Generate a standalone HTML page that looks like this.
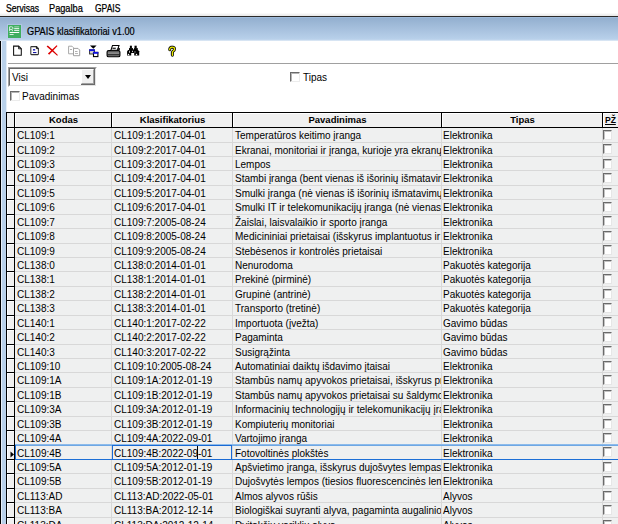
<!DOCTYPE html>
<html><head><meta charset="utf-8">
<style>
*{margin:0;padding:0;box-sizing:border-box}
html,body{width:618px;height:524px;overflow:hidden;background:#fff;font-family:"Liberation Sans",sans-serif;position:relative;color:#000}
.abs{position:absolute}
.m{position:absolute;top:2.5px;font-size:10px;white-space:nowrap;transform-origin:0 0;-webkit-text-stroke:0.25px #000}
#mbar{position:absolute;left:0;top:0;width:618px;height:16px;background:linear-gradient(#fff 0,#fff 13px,#f4f4f4 14px,#e8e8e8 16px)}
#mline{position:absolute;left:0;top:16px;width:618px;height:1px;background:#2a2a2a}
#title{position:absolute;left:0;top:17px;width:618px;height:24px;background:linear-gradient(#a4c0e0 0px,#94b0d0 1.5px,#b8d0ea 22px,#c4d8ee 23px,#eaf1f8 24px)}
#ttext{position:absolute;left:27px;top:26px;font-size:10px;-webkit-text-stroke:0.2px #000;white-space:nowrap;transform:scaleX(0.92);transform-origin:0 0}
#frameL{position:absolute;left:0;top:41px;width:6px;height:483px;background:#b9d1ea;border-left:1px solid #000}
#frameL2{position:absolute;left:6px;top:41px;width:1px;height:71px;background:#e4edf7}
#frameL:after{content:"";position:absolute;left:0;top:0;width:1px;height:100%;background:#e6eef8}
#sep{position:absolute;left:8px;top:63px;width:610px;height:1px;background:#a0a0a0}
#combo{position:absolute;left:8px;top:67px;width:89px;height:20px;border-top:1px solid #a0a0a0;border-left:1px solid #a0a0a0;border-right:1px solid #fff;border-bottom:1px solid #fff}
#combo .in{position:absolute;left:0;top:0;right:0;bottom:0;border-top:1px solid #696969;border-left:1px solid #696969;border-right:1px solid #e3e3e3;border-bottom:1px solid #e3e3e3;background:#fff}
#combo .txt{position:absolute;left:2px;top:3px;font-size:10px}
#combo .btn{position:absolute;right:0;top:0;width:14px;bottom:0;background:#f0f0f0;border-right:1px solid #696969;border-bottom:1px solid #696969}
#combo .btn:before{content:"";position:absolute;left:0;top:0;right:0;bottom:0;border-top:1px solid #fff;border-left:1px solid #fff;border-right:1px solid #a0a0a0;border-bottom:1px solid #a0a0a0}
#combo .arr{position:absolute;left:4px;top:6px;width:0;height:0;border-left:3px solid transparent;border-right:3px solid transparent;border-top:4px solid #000}
.chk{position:absolute;width:10px;height:10px;background:#fff;border-top:1px solid #6a6a6a;border-left:1px solid #6a6a6a;border-right:1px solid #ececec;border-bottom:1px solid #ececec;box-shadow:inset 1px 1px 0 #b4b4b4}
.lbl{position:absolute;font-size:10px;white-space:nowrap}
#grid{position:absolute;left:6px;top:112px;width:612px;height:412px;background:#eff0f0;border-top:1px solid #000;border-left:1px solid #000}
.hdr{position:absolute;top:113px;height:14px;background:#f0f0f0;border-top:1px solid #fff;border-left:1px solid #fff;font-weight:bold;font-size:9.5px;text-align:center;white-space:nowrap;line-height:12px}
.hline{position:absolute;top:127px;left:6px;width:612px;height:1px;background:#000}
.vline{position:absolute;top:113px;width:1px;height:15px;background:#000}
.dline{position:absolute;top:128px;width:1px;height:396px;background:#d8d8d8}
.ind{position:absolute;left:7px;width:7px;background:#f0f0f0;border-top:1px solid #fff;border-left:1px solid #fff}
.iline{position:absolute;left:7px;width:8px;height:1px;background:#000}
.rline{position:absolute;left:15px;width:603px;height:1px;background:#d8d8d8}
.cell{position:absolute;overflow:hidden;white-space:nowrap;font-size:10px}
.cell span{position:absolute;left:2px;top:2px}
.cb{position:absolute;left:603px;width:9px;height:10px;background:#fff;border-top:1px solid #6a6a6a;border-left:1px solid #6a6a6a;border-right:1px solid #e6e6e6;border-bottom:1px solid #e6e6e6;box-shadow:inset 1px 1px 0 #c4c4c4}
#indv{position:absolute;left:14px;top:113px;width:1px;height:411px;background:#000}
.selt{position:absolute;left:15px;width:603px;height:2px;background:linear-gradient(#9cc4ee,#5f9de0)}
.selb{position:absolute;left:15px;width:603px;height:1px;background:#1c6fd6}
.foc{position:absolute;border:1px solid #1a6ad4}
.sell{position:absolute;left:15px;width:1px;background:#1c6fd6}
.caret{position:absolute;width:1px;background:#000}
</style></head><body>
<div id="mbar"></div>
<span class="m" style="left:5.5px;transform:scaleX(0.865)">Servisas</span>
<span class="m" style="left:49px;transform:scaleX(0.92)">Pagalba</span>
<span class="m" style="left:95px;transform:scaleX(0.85)">GPAIS</span>
<div id="mline"></div>
<div id="title"></div>
<svg class="abs" style="left:7px;top:24px" width="15" height="15">
<rect x="0" y="0" width="15" height="15" fill="#c4cdf0" opacity="0.5"/>
<rect x="1" y="1" width="13" height="13" fill="#3fae60"/>
<path d="M2.6 7.2 V2.8 H4.6 Q6 2.8 6 4.2 Q6 5.4 4.6 5.4 H2.6 M4.2 5.4 L6 7.2" fill="none" stroke="#e8f5ec" stroke-width="0.9"/>
<rect x="7.2" y="3.8" width="5" height="1" fill="#fff"/>
<rect x="7.2" y="5.8" width="5" height="1" fill="#fff"/>
<rect x="2.6" y="8" width="9.6" height="1" fill="#fff"/>
<rect x="2.6" y="10" width="4" height="1" fill="#d8eedf"/>
<rect x="7.2" y="2" width="5" height="0.8" fill="#8fd0a5"/>
</svg>
<div id="ttext">GPAIS klasifikatoriai v1.00</div>
<div id="frameL"></div><div id="frameL2"></div>

<svg class="abs" style="left:0;top:0" width="200" height="62">
 <!-- new page -->
 <path d="M13.6 46.1 H18.6 L21.3 48.8 V55.2 H13.6 Z" fill="#fff" stroke="#111" stroke-width="1.05"/>
 <path d="M18.6 46.1 V48.8 H21.3" fill="none" stroke="#111" stroke-width="0.9"/>
 <!-- doc 2 -->
 <path d="M30.8 47.2 Q30.8 46.6 31.4 46.6 H36.6 L38.4 48.4 V54 Q38.4 54.6 37.8 54.6 H31.4 Q30.8 54.6 30.8 54 Z" fill="#fff" stroke="#333" stroke-width="1.05"/>
 <path d="M36.4 46.6 V48.6 H38.4" fill="none" stroke="#111" stroke-width="1"/>
 <rect x="33" y="49" width="2.2" height="1.6" fill="#3030c0"/>
 <rect x="33" y="52" width="3.4" height="1.1" fill="#1818a0"/>
 <!-- red x -->
 <path d="M46.6 46.6 L47.8 45.4 L52.4 49.4 L57.9 55 L57.2 55.8 L51.2 50.4 Z" fill="#d80000"/>
 <path d="M56.6 45.2 L57.5 46 L50.6 53.2 L49.2 54.8 L47.9 53.6 L49.6 51.9 Z" fill="#e00000"/>
 <!-- grey copy -->
 <path d="M68.6 46.2 H72 L73.6 47.8 V53.8 H68.6 Z" fill="#fff" stroke="#a8a8a8" stroke-width="1"/>
 <path d="M73.5 48.4 H78 L79.7 50.1 V55.7 H73.5 Z" fill="#fff" stroke="#a0a0a0" stroke-width="1"/>
 <rect x="70" y="49" width="2" height="1" fill="#b0b0b0"/>
 <rect x="75" y="51" width="2.5" height="1" fill="#b0b0b0"/>
 <rect x="75" y="53" width="3" height="1" fill="#b8b8b8"/>
 <!-- filter windows -->
 <path d="M90 45.4 H96.6 L93.3 48.8 Z" fill="#000"/>
 <rect x="89.6" y="49.8" width="4.8" height="4.2" fill="#d8d8d0" stroke="#222" stroke-width="0.9"/>
 <rect x="89.2" y="49.3" width="5.6" height="1.8" fill="#1010e0"/>
 <rect x="93.5" y="52.4" width="4.4" height="4.2" fill="#fff" stroke="#000" stroke-width="1.1"/>
 <rect x="93" y="51.9" width="5.3" height="1.9" fill="#1010e0"/>
 <!-- printer -->
 <path d="M108.6 50.6 H118.4 Q119.9 50.6 119.9 52.1 V55.4 Q119.9 56.7 118.4 56.7 H108.6 Q107.1 56.7 107.1 55.4 V52.1 Q107.1 50.6 108.6 50.6 Z" fill="#8a8a8a" stroke="#000" stroke-width="1.15"/>
 <rect x="107.6" y="54.3" width="11.8" height="1" fill="#111"/>
 <rect x="108" y="51.4" width="11" height="0.8" fill="#555"/>
 <path d="M112.5 45.5 H119 L117.5 50.2 H110.9 Z" fill="#fff" stroke="#000" stroke-width="1.05"/>
 <rect x="112.4" y="47.7" width="3.4" height="1.1" fill="#000"/>
 <rect x="117.6" y="48.2" width="2.4" height="1.6" fill="#000"/>
 <!-- binoculars -->
 <g fill="#000">
 <rect x="129.9" y="45.7" width="2" height="2.7"/>
 <rect x="129" y="48.1" width="4" height="3"/>
 <path d="M127.1 55.6 V51.2 L128.2 50 H131.2 V55.6 Z"/>
 <rect x="131" y="49.4" width="3.4" height="3.6"/>
 <rect x="134.5" y="45.7" width="2.2" height="2.7"/>
 <rect x="134" y="48.1" width="3.8" height="3"/>
 <path d="M134.2 55.6 V50 H138 L139.2 51.2 V55.6 Z"/>
 </g>
 <circle cx="128.5" cy="54.4" r="0.75" fill="#fff"/>
 <circle cx="136.5" cy="54.4" r="0.75" fill="#fff"/>
 <rect x="129.1" y="50.8" width="0.8" height="2" fill="#eee"/>
 <rect x="132.1" y="50.8" width="0.9" height="1.3" fill="#ddd"/>
 <rect x="134.6" y="51.2" width="0.9" height="1.5" fill="#888"/>
 <!-- help -->
 <rect x="170.2" y="44.9" width="3.8" height="1" fill="#c8c8ee" opacity="0.7"/>
 <rect x="170.2" y="50.5" width="1" height="5" fill="#b8b8e0" opacity="0.6"/>
 <path d="M169.7 49.8 Q169.6 47.2 172.1 47.2 Q174.5 47.2 174.5 49 Q174.5 50.3 173.3 51 Q172.4 51.6 172.4 52.8 V55.3" fill="none" stroke="#000" stroke-width="2.9" stroke-linecap="round"/>
 <path d="M169.7 49.8 Q169.6 47.2 172.1 47.2 Q174.5 47.2 174.5 49 Q174.5 50.3 173.3 51 Q172.4 51.6 172.4 52.8 V55.3" fill="none" stroke="#eeee00" stroke-width="1.3" stroke-linecap="round"/>
</svg>

<div id="sep"></div>
<div id="combo"><div class="in"><span class="txt">Visi</span><div class="btn"><div class="arr"></div></div></div></div>
<div class="chk" style="left:290px;top:72px"></div><div class="lbl" style="left:303px;top:72px">Tipas</div>
<div class="chk" style="left:10px;top:91px"></div><div class="lbl" style="left:22px;top:91px">Pavadinimas</div>
<div id="grid"></div>
<div class="hdr" style="left:15px;width:96px">Kodas</div>
<div class="hdr" style="left:112px;width:120px">Klasifikatorius</div>
<div class="hdr" style="left:233px;width:208px">Pavadinimas</div>
<div class="hdr" style="left:442px;width:160px">Tipas</div>
<div class="hdr" style="left:603px;width:20px;text-align:left;padding-left:1px"><span style="display:inline-block;border-bottom:1px solid #000;line-height:9px;transform:scaleX(0.9);transform-origin:0 0">PŽ</span></div>
<div class="vline" style="left:14px"></div>
<div class="vline" style="left:111px"></div>
<div class="vline" style="left:232px"></div>
<div class="vline" style="left:441px"></div>
<div class="vline" style="left:602px"></div>
<div class="hline"></div>
<div class="dline" style="left:111px"></div>
<div class="dline" style="left:232px"></div>
<div class="dline" style="left:441px"></div>
<div class="dline" style="left:602px"></div>
<div id="indv"></div>
<div class="ind" style="top:128px;height:14px"></div>
<div class="iline" style="top:142px"></div>
<div class="rline" style="top:142px"></div>
<div class="cell" style="left:15px;top:128px;width:96px;height:14px"><span>CL109:1</span></div>
<div class="cell" style="left:112px;top:128px;width:120px;height:14px"><span>CL109:1:2017-04-01</span></div>
<div class="cell" style="left:233px;top:128px;width:208px;height:14px"><span>Temperatūros keitimo įranga</span></div>
<div class="cell" style="left:442px;top:128px;width:160px;height:14px"><span style="left:1px">Elektronika</span></div>
<div class="cb" style="top:130px"></div>
<div class="ind" style="top:143px;height:13px"></div>
<div class="iline" style="top:156px"></div>
<div class="rline" style="top:156px"></div>
<div class="cell" style="left:15px;top:143px;width:96px;height:13px"><span>CL109:2</span></div>
<div class="cell" style="left:112px;top:143px;width:120px;height:13px"><span>CL109:2:2017-04-01</span></div>
<div class="cell" style="left:233px;top:143px;width:208px;height:13px"><span>Ekranai, monitoriai ir įranga, kurioje yra ekranų, kurių paviršiaus plotas</span></div>
<div class="cell" style="left:442px;top:143px;width:160px;height:13px"><span style="left:1px">Elektronika</span></div>
<div class="cb" style="top:144px"></div>
<div class="ind" style="top:157px;height:13px"></div>
<div class="iline" style="top:170px"></div>
<div class="rline" style="top:170px"></div>
<div class="cell" style="left:15px;top:157px;width:96px;height:13px"><span>CL109:3</span></div>
<div class="cell" style="left:112px;top:157px;width:120px;height:13px"><span>CL109:3:2017-04-01</span></div>
<div class="cell" style="left:233px;top:157px;width:208px;height:13px"><span>Lempos</span></div>
<div class="cell" style="left:442px;top:157px;width:160px;height:13px"><span style="left:1px">Elektronika</span></div>
<div class="cb" style="top:159px"></div>
<div class="ind" style="top:171px;height:14px"></div>
<div class="iline" style="top:185px"></div>
<div class="rline" style="top:185px"></div>
<div class="cell" style="left:15px;top:171px;width:96px;height:14px"><span>CL109:4</span></div>
<div class="cell" style="left:112px;top:171px;width:120px;height:14px"><span>CL109:4:2017-04-01</span></div>
<div class="cell" style="left:233px;top:171px;width:208px;height:14px"><span>Stambi įranga (bent vienas iš išorinių išmatavimų didesnis kaip 50 cm)</span></div>
<div class="cell" style="left:442px;top:171px;width:160px;height:14px"><span style="left:1px">Elektronika</span></div>
<div class="cb" style="top:173px"></div>
<div class="ind" style="top:186px;height:13px"></div>
<div class="iline" style="top:199px"></div>
<div class="rline" style="top:199px"></div>
<div class="cell" style="left:15px;top:186px;width:96px;height:13px"><span>CL109:5</span></div>
<div class="cell" style="left:112px;top:186px;width:120px;height:13px"><span>CL109:5:2017-04-01</span></div>
<div class="cell" style="left:233px;top:186px;width:208px;height:13px"><span>Smulki įranga (nė vienas iš išorinių išmatavimų nėra didesnis kaip 50 cm)</span></div>
<div class="cell" style="left:442px;top:186px;width:160px;height:13px"><span style="left:1px">Elektronika</span></div>
<div class="cb" style="top:188px"></div>
<div class="ind" style="top:200px;height:14px"></div>
<div class="iline" style="top:214px"></div>
<div class="rline" style="top:214px"></div>
<div class="cell" style="left:15px;top:200px;width:96px;height:14px"><span>CL109:6</span></div>
<div class="cell" style="left:112px;top:200px;width:120px;height:14px"><span>CL109:6:2017-04-01</span></div>
<div class="cell" style="left:233px;top:200px;width:208px;height:14px"><span>Smulki IT ir telekomunikacijų įranga (nė vienas iš išorinių išmatavimų)</span></div>
<div class="cell" style="left:442px;top:200px;width:160px;height:14px"><span style="left:1px">Elektronika</span></div>
<div class="cb" style="top:202px"></div>
<div class="ind" style="top:215px;height:13px"></div>
<div class="iline" style="top:228px"></div>
<div class="rline" style="top:228px"></div>
<div class="cell" style="left:15px;top:215px;width:96px;height:13px"><span>CL109:7</span></div>
<div class="cell" style="left:112px;top:215px;width:120px;height:13px"><span>CL109:7:2005-08-24</span></div>
<div class="cell" style="left:233px;top:215px;width:208px;height:13px"><span>Žaislai, laisvalaikio ir sporto įranga</span></div>
<div class="cell" style="left:442px;top:215px;width:160px;height:13px"><span style="left:1px">Elektronika</span></div>
<div class="cb" style="top:216px"></div>
<div class="ind" style="top:229px;height:14px"></div>
<div class="iline" style="top:243px"></div>
<div class="rline" style="top:243px"></div>
<div class="cell" style="left:15px;top:229px;width:96px;height:14px"><span>CL109:8</span></div>
<div class="cell" style="left:112px;top:229px;width:120px;height:14px"><span>CL109:8:2005-08-24</span></div>
<div class="cell" style="left:233px;top:229px;width:208px;height:14px"><span>Medicininiai prietaisai (išskyrus implantuotus ir užkrėstus gaminius)</span></div>
<div class="cell" style="left:442px;top:229px;width:160px;height:14px"><span style="left:1px">Elektronika</span></div>
<div class="cb" style="top:231px"></div>
<div class="ind" style="top:244px;height:13px"></div>
<div class="iline" style="top:257px"></div>
<div class="rline" style="top:257px"></div>
<div class="cell" style="left:15px;top:244px;width:96px;height:13px"><span>CL109:9</span></div>
<div class="cell" style="left:112px;top:244px;width:120px;height:13px"><span>CL109:9:2005-08-24</span></div>
<div class="cell" style="left:233px;top:244px;width:208px;height:13px"><span>Stebėsenos ir kontrolės prietaisai</span></div>
<div class="cell" style="left:442px;top:244px;width:160px;height:13px"><span style="left:1px">Elektronika</span></div>
<div class="cb" style="top:245px"></div>
<div class="ind" style="top:258px;height:13px"></div>
<div class="iline" style="top:271px"></div>
<div class="rline" style="top:271px"></div>
<div class="cell" style="left:15px;top:258px;width:96px;height:13px"><span>CL138:0</span></div>
<div class="cell" style="left:112px;top:258px;width:120px;height:13px"><span>CL138:0:2014-01-01</span></div>
<div class="cell" style="left:233px;top:258px;width:208px;height:13px"><span>Nenurodoma</span></div>
<div class="cell" style="left:442px;top:258px;width:160px;height:13px"><span style="left:1px">Pakuotės kategorija</span></div>
<div class="cb" style="top:260px"></div>
<div class="ind" style="top:272px;height:14px"></div>
<div class="iline" style="top:286px"></div>
<div class="rline" style="top:286px"></div>
<div class="cell" style="left:15px;top:272px;width:96px;height:14px"><span>CL138:1</span></div>
<div class="cell" style="left:112px;top:272px;width:120px;height:14px"><span>CL138:1:2014-01-01</span></div>
<div class="cell" style="left:233px;top:272px;width:208px;height:14px"><span>Prekinė (pirminė)</span></div>
<div class="cell" style="left:442px;top:272px;width:160px;height:14px"><span style="left:1px">Pakuotės kategorija</span></div>
<div class="cb" style="top:274px"></div>
<div class="ind" style="top:287px;height:13px"></div>
<div class="iline" style="top:300px"></div>
<div class="rline" style="top:300px"></div>
<div class="cell" style="left:15px;top:287px;width:96px;height:13px"><span>CL138:2</span></div>
<div class="cell" style="left:112px;top:287px;width:120px;height:13px"><span>CL138:2:2014-01-01</span></div>
<div class="cell" style="left:233px;top:287px;width:208px;height:13px"><span>Grupinė (antrinė)</span></div>
<div class="cell" style="left:442px;top:287px;width:160px;height:13px"><span style="left:1px">Pakuotės kategorija</span></div>
<div class="cb" style="top:289px"></div>
<div class="ind" style="top:301px;height:14px"></div>
<div class="iline" style="top:315px"></div>
<div class="rline" style="top:315px"></div>
<div class="cell" style="left:15px;top:301px;width:96px;height:14px"><span>CL138:3</span></div>
<div class="cell" style="left:112px;top:301px;width:120px;height:14px"><span>CL138:3:2014-01-01</span></div>
<div class="cell" style="left:233px;top:301px;width:208px;height:14px"><span>Transporto (tretinė)</span></div>
<div class="cell" style="left:442px;top:301px;width:160px;height:14px"><span style="left:1px">Pakuotės kategorija</span></div>
<div class="cb" style="top:303px"></div>
<div class="ind" style="top:316px;height:13px"></div>
<div class="iline" style="top:329px"></div>
<div class="rline" style="top:329px"></div>
<div class="cell" style="left:15px;top:316px;width:96px;height:13px"><span>CL140:1</span></div>
<div class="cell" style="left:112px;top:316px;width:120px;height:13px"><span>CL140:1:2017-02-22</span></div>
<div class="cell" style="left:233px;top:316px;width:208px;height:13px"><span>Importuota (įvežta)</span></div>
<div class="cell" style="left:442px;top:316px;width:160px;height:13px"><span style="left:1px">Gavimo būdas</span></div>
<div class="cb" style="top:317px"></div>
<div class="ind" style="top:330px;height:14px"></div>
<div class="iline" style="top:344px"></div>
<div class="rline" style="top:344px"></div>
<div class="cell" style="left:15px;top:330px;width:96px;height:14px"><span>CL140:2</span></div>
<div class="cell" style="left:112px;top:330px;width:120px;height:14px"><span>CL140:2:2017-02-22</span></div>
<div class="cell" style="left:233px;top:330px;width:208px;height:14px"><span>Pagaminta</span></div>
<div class="cell" style="left:442px;top:330px;width:160px;height:14px"><span style="left:1px">Gavimo būdas</span></div>
<div class="cb" style="top:332px"></div>
<div class="ind" style="top:345px;height:13px"></div>
<div class="iline" style="top:358px"></div>
<div class="rline" style="top:358px"></div>
<div class="cell" style="left:15px;top:345px;width:96px;height:13px"><span>CL140:3</span></div>
<div class="cell" style="left:112px;top:345px;width:120px;height:13px"><span>CL140:3:2017-02-22</span></div>
<div class="cell" style="left:233px;top:345px;width:208px;height:13px"><span>Susigrąžinta</span></div>
<div class="cell" style="left:442px;top:345px;width:160px;height:13px"><span style="left:1px">Gavimo būdas</span></div>
<div class="cb" style="top:346px"></div>
<div class="ind" style="top:359px;height:13px"></div>
<div class="iline" style="top:372px"></div>
<div class="rline" style="top:372px"></div>
<div class="cell" style="left:15px;top:359px;width:96px;height:13px"><span>CL109:10</span></div>
<div class="cell" style="left:112px;top:359px;width:120px;height:13px"><span>CL109:10:2005-08-24</span></div>
<div class="cell" style="left:233px;top:359px;width:208px;height:13px"><span>Automatiniai daiktų išdavimo įtaisai</span></div>
<div class="cell" style="left:442px;top:359px;width:160px;height:13px"><span style="left:1px">Elektronika</span></div>
<div class="cb" style="top:361px"></div>
<div class="ind" style="top:373px;height:14px"></div>
<div class="iline" style="top:387px"></div>
<div class="rline" style="top:387px"></div>
<div class="cell" style="left:15px;top:373px;width:96px;height:14px"><span>CL109:1A</span></div>
<div class="cell" style="left:112px;top:373px;width:120px;height:14px"><span>CL109:1A:2012-01-19</span></div>
<div class="cell" style="left:233px;top:373px;width:208px;height:14px"><span>Stambūs namų apyvokos prietaisai, išskyrus prietaisus su šaldymo</span></div>
<div class="cell" style="left:442px;top:373px;width:160px;height:14px"><span style="left:1px">Elektronika</span></div>
<div class="cb" style="top:375px"></div>
<div class="ind" style="top:388px;height:13px"></div>
<div class="iline" style="top:401px"></div>
<div class="rline" style="top:401px"></div>
<div class="cell" style="left:15px;top:388px;width:96px;height:13px"><span>CL109:1B</span></div>
<div class="cell" style="left:112px;top:388px;width:120px;height:13px"><span>CL109:1B:2012-01-19</span></div>
<div class="cell" style="left:233px;top:388px;width:208px;height:13px"><span>Stambūs namų apyvokos prietaisai su šaldymo įranga</span></div>
<div class="cell" style="left:442px;top:388px;width:160px;height:13px"><span style="left:1px">Elektronika</span></div>
<div class="cb" style="top:390px"></div>
<div class="ind" style="top:402px;height:14px"></div>
<div class="iline" style="top:416px"></div>
<div class="rline" style="top:416px"></div>
<div class="cell" style="left:15px;top:402px;width:96px;height:14px"><span>CL109:3A</span></div>
<div class="cell" style="left:112px;top:402px;width:120px;height:14px"><span>CL109:3A:2012-01-19</span></div>
<div class="cell" style="left:233px;top:402px;width:208px;height:14px"><span>Informacinių technologijų ir telekomunikacijų įranga</span></div>
<div class="cell" style="left:442px;top:402px;width:160px;height:14px"><span style="left:1px">Elektronika</span></div>
<div class="cb" style="top:404px"></div>
<div class="ind" style="top:417px;height:13px"></div>
<div class="iline" style="top:430px"></div>
<div class="rline" style="top:430px"></div>
<div class="cell" style="left:15px;top:417px;width:96px;height:13px"><span>CL109:3B</span></div>
<div class="cell" style="left:112px;top:417px;width:120px;height:13px"><span>CL109:3B:2012-01-19</span></div>
<div class="cell" style="left:233px;top:417px;width:208px;height:13px"><span>Kompiuterių monitoriai</span></div>
<div class="cell" style="left:442px;top:417px;width:160px;height:13px"><span style="left:1px">Elektronika</span></div>
<div class="cb" style="top:419px"></div>
<div class="ind" style="top:431px;height:14px"></div>
<div class="iline" style="top:445px"></div>
<div class="rline" style="top:445px"></div>
<div class="cell" style="left:15px;top:431px;width:96px;height:14px"><span>CL109:4A</span></div>
<div class="cell" style="left:112px;top:431px;width:120px;height:14px"><span>CL109:4A:2022-09-01</span></div>
<div class="cell" style="left:233px;top:431px;width:208px;height:14px"><span>Vartojimo įranga</span></div>
<div class="cell" style="left:442px;top:431px;width:160px;height:14px"><span style="left:1px">Elektronika</span></div>
<div class="cb" style="top:433px"></div>
<div class="ind" style="top:446px;height:13px"></div>
<div class="iline" style="top:459px"></div>
<div class="rline" style="top:459px"></div>
<div class="cell" style="left:15px;top:446px;width:96px;height:13px"><span>CL109:4B</span></div>
<div class="cell" style="left:112px;top:446px;width:120px;height:13px"><span>CL109:4B:2022-09-01</span></div>
<div class="cell" style="left:233px;top:446px;width:208px;height:13px"><span>Fotovoltinės plokštės</span></div>
<div class="cell" style="left:442px;top:446px;width:160px;height:13px"><span style="left:1px">Elektronika</span></div>
<div class="cb" style="top:447px"></div>
<div class="ind" style="top:460px;height:13px"></div>
<div class="iline" style="top:473px"></div>
<div class="rline" style="top:473px"></div>
<div class="cell" style="left:15px;top:460px;width:96px;height:13px"><span>CL109:5A</span></div>
<div class="cell" style="left:112px;top:460px;width:120px;height:13px"><span>CL109:5A:2012-01-19</span></div>
<div class="cell" style="left:233px;top:460px;width:208px;height:13px"><span>Apšvietimo įranga, išskyrus dujošvytes lempas</span></div>
<div class="cell" style="left:442px;top:460px;width:160px;height:13px"><span style="left:1px">Elektronika</span></div>
<div class="cb" style="top:462px"></div>
<div class="ind" style="top:474px;height:14px"></div>
<div class="iline" style="top:488px"></div>
<div class="rline" style="top:488px"></div>
<div class="cell" style="left:15px;top:474px;width:96px;height:14px"><span>CL109:5B</span></div>
<div class="cell" style="left:112px;top:474px;width:120px;height:14px"><span>CL109:5B:2012-01-19</span></div>
<div class="cell" style="left:233px;top:474px;width:208px;height:14px"><span>Dujošvytės lempos (tiesios fluorescencinės lempos)</span></div>
<div class="cell" style="left:442px;top:474px;width:160px;height:14px"><span style="left:1px">Elektronika</span></div>
<div class="cb" style="top:476px"></div>
<div class="ind" style="top:489px;height:13px"></div>
<div class="iline" style="top:502px"></div>
<div class="rline" style="top:502px"></div>
<div class="cell" style="left:15px;top:489px;width:96px;height:13px"><span>CL113:AD</span></div>
<div class="cell" style="left:112px;top:489px;width:120px;height:13px"><span>CL113:AD:2022-05-01</span></div>
<div class="cell" style="left:233px;top:489px;width:208px;height:13px"><span>Almos alyvos rūšis</span></div>
<div class="cell" style="left:442px;top:489px;width:160px;height:13px"><span style="left:1px">Alyvos</span></div>
<div class="cb" style="top:491px"></div>
<div class="ind" style="top:503px;height:14px"></div>
<div class="iline" style="top:517px"></div>
<div class="rline" style="top:517px"></div>
<div class="cell" style="left:15px;top:503px;width:96px;height:14px"><span>CL113:BA</span></div>
<div class="cell" style="left:112px;top:503px;width:120px;height:14px"><span>CL113:BA:2012-12-14</span></div>
<div class="cell" style="left:233px;top:503px;width:208px;height:14px"><span>Biologiškai suyranti alyva, pagaminta augalinio aliejaus pagrindu</span></div>
<div class="cell" style="left:442px;top:503px;width:160px;height:14px"><span style="left:1px">Alyvos</span></div>
<div class="cb" style="top:505px"></div>
<div class="ind" style="top:518px;height:13px"></div>
<div class="iline" style="top:531px"></div>
<div class="rline" style="top:531px"></div>
<div class="cell" style="left:15px;top:518px;width:96px;height:13px"><span>CL113:DA</span></div>
<div class="cell" style="left:112px;top:518px;width:120px;height:13px"><span>CL113:DA:2012-12-14</span></div>
<div class="cell" style="left:233px;top:518px;width:208px;height:13px"><span>Dvitakčių variklių alyva</span></div>
<div class="cell" style="left:442px;top:518px;width:160px;height:13px"><span style="left:1px">Alyvos</span></div>
<div class="cb" style="top:520px"></div>
<div class="selt" style="top:444px"></div>
<div class="selb" style="top:459px"></div>
<div class="sell" style="top:445px;height:14px"></div>
<div class="foc" style="left:112px;top:445px;width:120px;height:15px"></div>
<div class="caret" style="left:197px;top:446px;height:13px"></div>
<svg class="abs" style="left:9px;top:451px" width="6" height="8"><path d="M1.5 0.5 L5 3.5 L1.5 6.5 Z" fill="#000"/></svg>
</body></html>
